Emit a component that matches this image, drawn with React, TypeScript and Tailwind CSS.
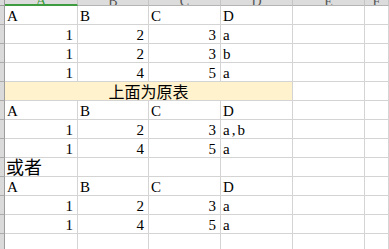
import React from "react";

type Align = "left" | "right";

const COLS = ["w-[73px]", "w-[71px]", "w-[72px]", "w-[72px]", "w-[72px]", "flex-1"];

function Cell({ col, align = "left", children }: { col: number; align?: Align; children?: React.ReactNode }) {
  return (
    <div
      className={`${COLS[col]} shrink-0 h-full flex items-end border-r border-b border-[#d4d4d4] whitespace-nowrap overflow-visible ${
        align === "right" ? "justify-end pr-[4px]" : "justify-start pl-[2px]"
      }`}
    >
      <span className="leading-[15px] text-[15px] text-black">{children}</span>
    </div>
  );
}

function RowHead() {
  return <div className="w-[5px] shrink-0 h-full bg-[#dadada] border-r border-b border-r-[#9c9c9c] border-b-[#ababab]" />;
}

function DataRow({ cells }: { cells: [React.ReactNode, Align][] }) {
  return (
    <div className="flex h-[19px]">
      <RowHead />
      {cells.map(([c, a], i) => (
        <Cell key={i} col={i} align={a}>
          {c}
        </Cell>
      ))}
      <Cell col={4} />
      <Cell col={5} />
    </div>
  );
}

function Letters() {
  return (
    <DataRow
      cells={[
        ["A", "left"],
        ["B", "left"],
        ["C", "left"],
        ["D", "left"],
      ]}
    />
  );
}

function Nums({ a, b, c, d }: { a: string; b: string; c: string; d: React.ReactNode }) {
  return (
    <DataRow
      cells={[
        [a, "right"],
        [b, "right"],
        [c, "right"],
        [d, "left"],
      ]}
    />
  );
}

export default function App() {
  const headers = ["A", "B", "C", "D", "E", "F"];
  return (
    <div
      className="w-[389px] h-[249px] overflow-hidden bg-white"
      style={{ fontFamily: '"Liberation Serif", "Noto Sans CJK SC", serif' }}
    >
      {/* column header strip */}
      <div className="flex h-[6px]">
        <div className="w-[5px] shrink-0 h-full bg-[#dadada] border-r border-b border-[#9c9c9c]" />
        {headers.map((h, i) => (
          <div
            key={h}
            className={`${COLS[i]} shrink-0 h-full flex justify-center items-end overflow-hidden bg-[#dcdcdc] border-r border-r-[#c4c4c4] ${
              i === 0 ? "border-b-2 border-b-[#3f9b3f] text-[#3f9b3f]" : "border-b border-b-[#b4b4b4] text-[#555]"
            }`}
          >
            <span className="text-[14px] leading-[14px] -mb-[4px]">{h}</span>
          </div>
        ))}
      </div>

      <Letters />
      <Nums a="1" b="2" c="3" d="a" />
      <Nums a="1" b="2" c="3" d="b" />
      <Nums a="1" b="4" c="5" d="a" />

      {/* merged title row */}
      <div className="flex h-[19px]">
        <RowHead />
        <div className="w-[288px] shrink-0 h-full flex items-center justify-center bg-[#fff2cc] border-r border-b border-[#d4d4d4]">
          <span
            className="text-[16px] leading-[16px] text-black"
            style={{ fontFamily: '"Noto Sans CJK SC", sans-serif' }}
          >
            上面为原表
          </span>
        </div>
        <Cell col={4} />
        <Cell col={5} />
      </div>

      <Letters />
      <Nums a="1" b="2" c="3" d={<span className="tracking-[2px]">a,b</span>} />
      <Nums a="1" b="4" c="5" d="a" />

      {/* note row */}
      <div className="flex h-[19px]">
        <RowHead />
        <div className="w-[73px] shrink-0 h-full flex items-start pl-[1px] border-r border-b border-[#d4d4d4] whitespace-nowrap">
          <span
            className="text-[18px] leading-[18px] -mt-[1px] text-black"
            style={{ fontFamily: '"Noto Sans CJK SC", sans-serif' }}
          >
            或者
          </span>
        </div>
        <Cell col={1} />
        <Cell col={2} />
        <Cell col={3} />
        <Cell col={4} />
        <Cell col={5} />
      </div>

      <Letters />
      <Nums a="1" b="2" c="3" d="a" />
      <Nums a="1" b="4" c="5" d="a" />
      <DataRow cells={[["", "left"], ["", "left"], ["", "left"], ["", "left"]]} />
    </div>
  );
}
